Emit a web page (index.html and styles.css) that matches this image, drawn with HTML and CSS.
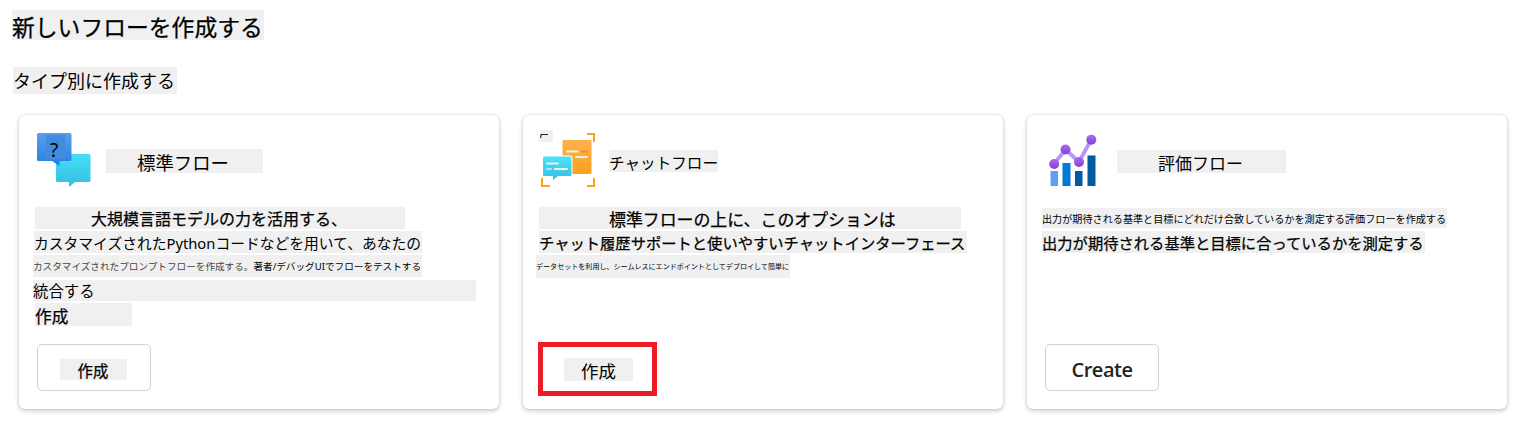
FILE: index.html
```html
<!DOCTYPE html>
<html lang="ja">
<head>
<meta charset="utf-8">
<title>新しいフローを作成する</title>
<link rel="stylesheet" href="styles.css">
</head>
<body>
<h1 class="strip title">新しいフローを作成する</h1>
<h2 class="strip subtitle">タイプ別に作成する</h2>
<main class="cards">
  <section class="card">
    <header class="head">
      <svg class="icon icon-standard" width="54" height="55" viewBox="0 0 54 55">
        <defs>
          <linearGradient id="blue" x2="0" y2="1"><stop stop-color="#5b9df0"/><stop offset="1" stop-color="#1f83dd"/></linearGradient>
          <linearGradient id="cyan" x2="0" y2="1"><stop stop-color="#46def8"/><stop offset="1" stop-color="#34bfe0"/></linearGradient>
        </defs>
        <path fill="url(#cyan)" d="M21 21H52Q53.500 21 53.500 22.500V47.500Q53.500 49 52 49H38L32 54V49H20.500Q19 49 19 47.500V22.500Q19 21 21 21Z"/>
        <path fill="url(#blue)" d="M1.500 0H33Q34.500 0 34.500 1.500V26.500Q34.500 28 33 28H22.500V33L15 28H1.500Q0 28 0 26.500V1.500Q0 0 1.500 0Z"/>
        <path fill="#438bdc" d="M9 2H28V26H9Z"/>
        <text class="mark" x="13" y="24">?</text>
      </svg>
      <span class="strip name name-standard">標準フロー</span>
    </header>
    <div class="lines">
      <p class="strip s1">大規模言語モデルの力を活用する、</p>
      <p class="strip s2">カスタマイズされたPythonコードなどを用いて、あなたの</p>
      <p class="strip s3"><span class="faint">カスタマイズされたプロンプトフローを作成する。</span>著者/デバッグUIでフローをテストする</p>
      <p class="strip s4">統合する</p>
      <p class="strip s5">作成</p>
    </div>
    <button class="btn"><span class="strip b1">作成</span></button>
  </section>
  <section class="card">
    <header class="head">
      <svg class="icon icon-chat" width="58" height="58" viewBox="0 0 58 58">
        <defs>
          <linearGradient id="orange" x2="0" y2="1"><stop stop-color="#ffb14b"/><stop offset="1" stop-color="#faa21d"/></linearGradient>
          <linearGradient id="aqua" x2="0" y2="1"><stop stop-color="#4be3fc"/><stop offset="1" stop-color="#32bfe2"/></linearGradient>
        </defs>
        <path fill="#f0f0f0" d="M2 0H15V12H0V8H2Z"/>
        <path d="M2.500 8L3.200 4.500H10" fill="none" stroke="#222" stroke-width="1.200"/>
        <g fill="none" stroke="#faa21d" stroke-width="2"><path d="M49 4H56V12"/><path d="M4 48V56H12"/><path d="M49 56H56V48"/></g>
        <rect x="24.500" y="10" width="29" height="34" rx="1" fill="url(#orange)"/>
        <path fill="url(#aqua)" stroke="#fff" stroke-width="2" paint-order="stroke" d="M6 26.500H32Q33.500 26.500 33.500 28V45Q33.500 46 32 46H20L15 50V46H6Q5 46 5 45V28Q5 26.500 6 26.500Z"/>
        <g fill="none" stroke="#f1f1f1" stroke-width="2" stroke-linecap="round"><path d="M29 21.500H40M38 27H49M9 33.500H20M17 39H29"/><path stroke="#f78d1e" d="M44 21.500H49"/><path stroke="#9defff" d="M9 39H13"/></g>
      </svg>
      <span class="strip name name-chat">チャットフロー</span>
    </header>
    <div class="lines">
      <p class="strip c1">標準フローの上に、このオプションは</p>
      <p class="strip c2">チャット履歴サポートと使いやすいチャットインターフェース</p>
      <p class="strip c3">データセットを利用し、シームレスにエンドポイントとしてデプロイして簡単に</p>
    </div>
    <button class="btn btn-marked"><span class="strip b2">作成</span></button>
  </section>
  <section class="card">
    <header class="head">
      <svg class="icon icon-eval" width="48" height="54" viewBox="0 0 48 54">
        <defs>
          <linearGradient id="purple" x2="0" y2="1"><stop stop-color="#b06be8"/><stop offset="1" stop-color="#8040dd"/></linearGradient>
        </defs>
        <path fill="#5ea0ef" d="M1.500 38H9V53H1.500Z"/><path fill="#0078d4" d="M13.500 30H21.500V53H13.500Z"/><path fill="#005ba1" d="M26 38H33.500V53H26ZM38.500 22.500H46.500V53H38.500Z"/>
        <path d="M5 31L16.500 16.500L30 29L42 7" fill="none" stroke="#b796f9" stroke-width="3.800"/>
        <g fill="url(#purple)"><circle cx="5.200" cy="31" r="5"/><circle cx="16.500" cy="16.500" r="5"/><circle cx="30" cy="29" r="5"/><circle cx="42.300" cy="6.700" r="5"/></g>
      </svg>
      <span class="strip name name-eval">評価フロー</span>
    </header>
    <div class="lines">
      <p class="strip e1">出力が期待される基準と目標にどれだけ合致しているかを測定する評価フローを作成する</p>
      <p class="strip e2">出力が期待される基準と目標に合っているかを測定する</p>
    </div>
    <button class="btn"><span class="label">Create</span></button>
  </section>
</main>
</body>
</html>
```
FILE: styles.css
```css
* { box-sizing: border-box; }
body {
  margin: 0;
  height: 421px;
  padding: 10px 12px 0;
  overflow: hidden;
  background: #fff;
  color: #000;
  font-family: "Noto Sans", "Noto Sans CJK JP", sans-serif;
}
h1, h2, p { margin: 0; font-weight: 400; }
.strip {
  display: block;
  background: #f0f0f0;
  white-space: nowrap;
  height: 22px;
  line-height: 22px;
}
.title { width: 252px; height: 30px; line-height: 35px; font-size: 22.8px; }
.subtitle {
  width: 164px; height: 27px; line-height: 29px;
  margin: 27px 0 0 1px;
  font-size: 18px;
}
.title, .s1, .c1, .c2, .e2, .s5, .b1 { -webkit-text-stroke: .25px #000; }
.cards {
  display: grid;
  grid-template-columns: repeat(3, 480px);
  gap: 24px;
  margin: 21px 0 0 7px;
}
.card {
  display: flex;
  flex-direction: column;
  height: 294px;
  padding: 15px 14px 0;
  border-radius: 6px;
  background: #fff;
  box-shadow: 0 2px 5px rgba(0, 0, 0, .2), 0 0 2px rgba(0, 0, 0, .16);
}
.head { display: flex; height: 77px; }
.icon { flex: none; }
.icon-standard { margin: 3px 0 0 4px; }
.icon-chat { margin-left: 1px; }
.icon-eval { margin: 3px 0 0 8px; }
.mark { font-size: 19px; }
.name-standard { width: 157px; height: 24px; line-height: 28px; margin: 19px 0 0 15px; padding-left: 31px; font-size: 18.4px; }
.name-chat { width: 109px; height: 22px; line-height: 26px; margin: 20px 0 0 13px; font-size: 15.6px; }
.name-eval { width: 169px; height: 23px; line-height: 27px; margin: 20px 0 0 20px; padding-left: 41px; font-size: 17px; }
.lines { display: flex; flex-direction: column; gap: 2px; height: 137px; }
.s1 { width: 370px; margin-left: 2px; padding-left: 56px; font-size: 16px; line-height: 25px; }
.s2 { width: 388px; margin-left: 1px; font-size: 14.77px; line-height: 24px; }
.s3 { width: 389px; font-size: 9.62px; line-height: 24px; }
.faint { color: #444; }
.s4 { width: 443px; height: 21px; margin-top: 1px; font-size: 15.4px; line-height: 23px; }
.s5 { width: 97px; height: 23px; margin-left: 2px; font-size: 16.7px; line-height: 27px; }
.c1 { width: 422px; margin-left: 2px; padding-left: 70px; font-size: 16.9px; line-height: 25px; }
.c2 { width: 428px; margin-left: 2px; font-size: 15.3px; line-height: 25px; }
.c3 { width: 254px; margin-left: -1px; font-size: 7.05px; line-height: 23px; height: 23px; }
.e1 { width: 405px; height: 20px; margin: 1px 0 1px 1px; font-size: 10.12px; line-height: 22px; }
.e2 { width: 383px; margin-left: 1px; font-size: 15.3px; line-height: 25px; }
.btn {
  display: grid;
  place-items: center;
  width: 114px;
  height: 47px;
  margin-left: 4px;
  padding: 0;
  border: 1px solid #d1d1d1;
  border-radius: 5px;
  background: #fff;
  color: #242424;
  font: 600 20px "Open Sans", sans-serif;
}
.label { padding-top: 3px; letter-spacing: -.5px; }
.b1, .b2 { color: #000; font-family: "Noto Sans CJK JP", sans-serif; font-weight: 400; }
.b1 { width: 67px; height: 21px; margin: 3px 2px 0 0; font-size: 15.4px; line-height: 23px; }
.btn-marked {
  width: 119px;
  height: 54px;
  margin: -2px 0 0 1px;
  border: 5px solid #ed1c24;
  border-radius: 0;
}
.b2 { width: 69px; height: 23px; margin-left: 2px; font-size: 17.5px; line-height: 25px; }
```
